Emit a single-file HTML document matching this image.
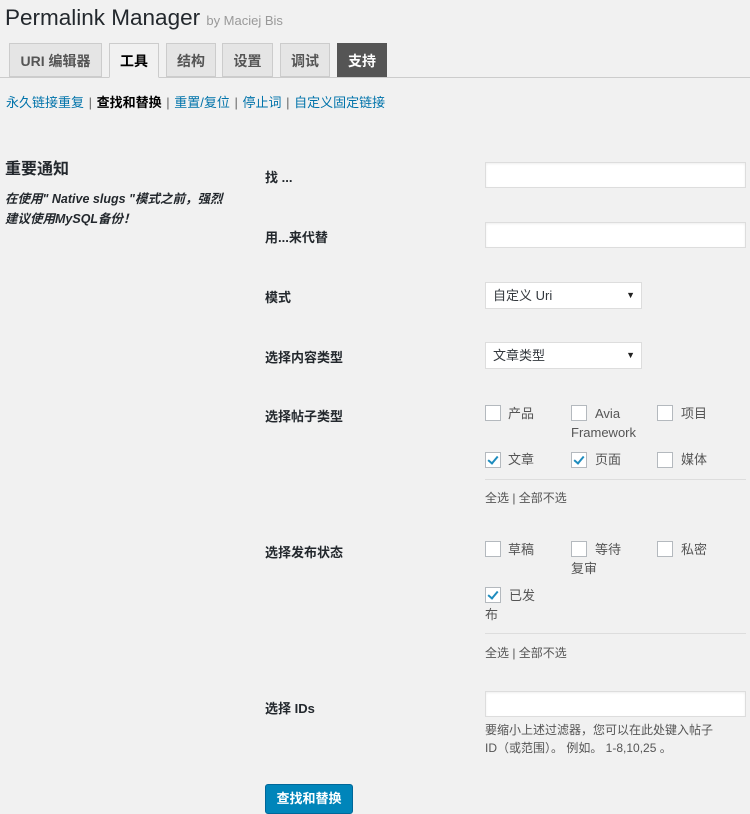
<!DOCTYPE html>
<html><head><meta charset="utf-8"><style>
body{margin:0;width:750px;height:812px;background:#f1f1f1;font-family:"Liberation Sans","Noto Sans CJK SC",sans-serif;color:#444;font-size:13px;position:relative;overflow:hidden}
.a{position:absolute;white-space:nowrap}
.tab{position:absolute;top:43px;height:34px;border:1px solid #ccc;background:#e5e5e5;color:#555;font-weight:bold;font-size:14px;line-height:34px;text-align:center;box-sizing:border-box}
.lbl{position:absolute;left:265px;font-weight:bold;font-size:13px;color:#23282d}
.inp{position:absolute;left:485px;width:261px;height:26px;background:#fff;border:1px solid #ddd;box-sizing:border-box;box-shadow:inset 0 1px 2px rgba(0,0,0,.07)}
.sel{position:absolute;left:485px;width:157px;height:27px;background:#fff;border:1px solid #ddd;box-sizing:border-box;font-size:13px;color:#32373c;line-height:25px;padding-left:7px}
.sel:after{content:"▼";position:absolute;right:6px;top:0;font-size:9px;color:#222}
.cb{position:absolute;width:16px;height:16px;background:#fff;border:1px solid #b4b9be;box-sizing:border-box}
.cb.c:after{content:"";position:absolute;left:4px;top:1px;width:4px;height:8px;border:solid #1e8cbe;border-width:0 2px 2px 0;transform:rotate(40deg)}
.t{position:absolute;color:#555;font-size:13px;line-height:19px}
.hr{position:absolute;left:485px;width:261px;height:1px;background:#ddd}
</style></head><body>
<div class="a" style="left:5px;top:5px;font-size:22.5px;color:#23282d">Permalink Manager <span style="font-size:13px;color:#999">by Maciej Bis</span></div>
<div class="a" style="left:0;top:77px;width:750px;height:1px;background:#ccc"></div>
<div class="tab" style="left:9px;width:93px">URI 编辑器</div>
<div class="tab" style="left:109px;width:50px;background:#f1f1f1;color:#000;border-bottom-color:#f1f1f1;height:35px">工具</div>
<div class="tab" style="left:166px;width:50px">结构</div>
<div class="tab" style="left:222px;width:51px">设置</div>
<div class="tab" style="left:280px;width:50px">调试</div>
<div class="tab" style="left:337px;width:50px;background:#555;color:#fff;border-color:#555">支持</div>
<div class="a" style="left:6px;top:92px;color:#0073aa;word-spacing:1px">永久链接重复 <span style="color:#666">|</span> <b style="color:#000">查找和替换</b> <span style="color:#666">|</span> 重置/复位 <span style="color:#666">|</span> 停止词 <span style="color:#666">|</span> 自定义固定链接</div>
<div class="a" style="left:5px;top:155px;font-size:16px;font-weight:bold;color:#23282d">重要通知</div>
<div class="a" style="left:5px;top:189px;font-size:12.5px;font-weight:bold;font-style:italic;color:#23282d;line-height:20px">在使用" Native slugs "模式之前，强烈<br>建议使用MySQL备份！</div>
<div class="lbl" style="top:167px">找 ...</div>
<div class="inp" style="top:162px"></div>
<div class="lbl" style="top:227px">用...来代替</div>
<div class="inp" style="top:222px"></div>
<div class="lbl" style="top:287px">模式</div>
<div class="sel" style="top:282px">自定义 Uri</div>
<div class="lbl" style="top:347px">选择内容类型</div>
<div class="sel" style="top:342px">文章类型</div>
<div class="lbl" style="top:406px">选择帖子类型</div>
<div class="cb" style="left:485px;top:405px"></div><div class="t" style="left:508px;top:404px">产品</div>
<div class="cb" style="left:571px;top:405px"></div><div class="t" style="left:571px;top:404px;width:80px;text-indent:24px">Avia Framework</div>
<div class="cb" style="left:657px;top:405px"></div><div class="t" style="left:681px;top:404px">项目</div>
<div class="cb c" style="left:485px;top:452px"></div><div class="t" style="left:508px;top:450px">文章</div>
<div class="cb c" style="left:571px;top:452px"></div><div class="t" style="left:595px;top:450px">页面</div>
<div class="cb" style="left:657px;top:452px"></div><div class="t" style="left:681px;top:450px">媒体</div>
<div class="hr" style="top:479px"></div>
<div class="t" style="left:485px;top:489px;font-size:12px">全选 | 全部不选</div>
<div class="lbl" style="top:542px">选择发布状态</div>
<div class="cb" style="left:485px;top:541px"></div><div class="t" style="left:508px;top:540px">草稿</div>
<div class="cb" style="left:571px;top:541px"></div><div class="t" style="left:571px;top:540px;width:60px;text-indent:24px">等待复审</div>
<div class="cb" style="left:657px;top:541px"></div><div class="t" style="left:681px;top:540px">私密</div>
<div class="cb c" style="left:485px;top:587px"></div><div class="t" style="left:485px;top:586px;width:60px;text-indent:24px">已发布</div>
<div class="hr" style="top:633px"></div>
<div class="t" style="left:485px;top:644px;font-size:12px">全选 | 全部不选</div>
<div class="lbl" style="top:698px">选择 IDs</div>
<div class="inp" style="top:691px"></div>
<div class="t" style="left:485px;top:721px;font-size:12px;line-height:18px">要缩小上述过滤器，您可以在此处键入帖子<br>ID（或范围）。 例如。 1-8,10,25 。</div>
<div class="a" style="left:265px;top:784px;width:88px;height:30px;background:#0085ba;border:1px solid #006799;box-sizing:border-box;border-radius:3px;color:#fff;font-weight:bold;font-size:13px;line-height:28px;text-align:center">查找和替换</div>
</body></html>
